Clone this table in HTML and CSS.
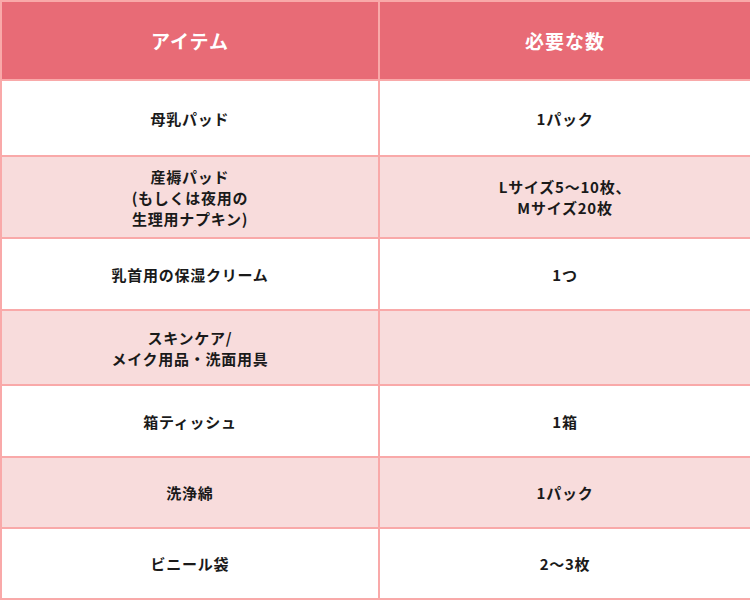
FILE: index.html
```html
<!DOCTYPE html>
<html lang="ja">
<head>
<meta charset="utf-8">
<link rel="stylesheet" href="styles.css">
</head>
<body>
<table class="list">
  <colgroup><col class="c1"><col class="c2"></colgroup>
  <thead>
    <tr class="h"><th>アイテム</th><th>必要な数</th></tr>
  </thead>
  <tbody>
    <tr class="r1"><td>母乳パッド</td><td>1パック</td></tr>
    <tr class="r2 alt"><td>産褥パッド<br>(もしくは夜用の<br>生理用ナプキン)</td><td>Lサイズ5～10枚、<br>Mサイズ20枚</td></tr>
    <tr class="r3"><td>乳首用の保湿クリーム</td><td>1つ</td></tr>
    <tr class="r4 alt"><td>スキンケア/<br>メイク用品・洗面用具</td><td></td></tr>
    <tr class="r5"><td>箱ティッシュ</td><td>1箱</td></tr>
    <tr class="r6 alt"><td>洗浄綿</td><td>1パック</td></tr>
    <tr class="r7"><td>ビニール袋</td><td>2～3枚</td></tr>
  </tbody>
</table>
</body>
</html>
```
FILE: styles.css
```css
html, body { margin: 0; padding: 0; background: #fff; }
.list {
  width: 750px;
  border-collapse: collapse;
  table-layout: fixed;
  font-family: "Noto Sans CJK JP", "Noto Sans", sans-serif;
}
.c1 { width: 378px; }
.c2 { width: 372px; }
.list th, .list td {
  border: 2px solid #f9a9a9;
  text-align: center;
  vertical-align: middle;
  padding: 0;
  font-weight: 700;
  letter-spacing: 0.05em;
}
.list th {
  background: #e86b76;
  color: #fff;
  font-size: 19px;
}
.list td {
  color: #1a1a1a;
  font-size: 15px;
  line-height: 21px;
}
.alt td { background: #f8dcdc; }
.h th { height: 77px; }
.r1 td { height: 74px; }
.r2 td { height: 80px; }
.r3 td { height: 70px; }
.r4 td { height: 73px; }
.r5 td { height: 70px; }
.r6 td { height: 69px; }
.r7 td { height: 69px; }
```
